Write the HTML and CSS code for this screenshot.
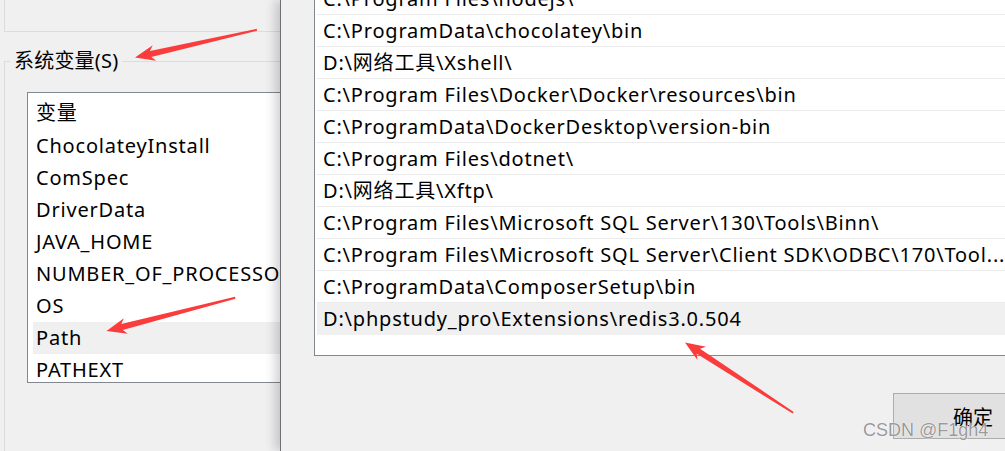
FILE: index.html
```html
<!DOCTYPE html>
<html lang="zh-CN">
<head>
<meta charset="utf-8">
<title>环境变量</title>
<link rel="stylesheet" href="styles.css">
</head>
<body>
<div class="screen">
  <div class="left">
    <div class="userbox"></div>
    <fieldset class="sysbox">
      <legend>系统变量(S)</legend>
      <div class="varlist">
        <div class="vhead">变量</div>
        <div class="vrow">ChocolateyInstall</div>
        <div class="vrow">ComSpec</div>
        <div class="vrow">DriverData</div>
        <div class="vrow">JAVA_HOME</div>
        <div class="vrow">NUMBER_OF_PROCESSORS</div>
        <div class="vrow">OS</div>
        <div class="vrow sel">Path</div>
        <div class="vrow">PATHEXT</div>
      </div>
    </fieldset>
  </div>
  <div class="dialog">
    <div class="pathlist">
      <div class="prow">C:\Program Files\nodejs\</div>
      <div class="prow">C:\ProgramData\chocolatey\bin</div>
      <div class="prow">D:\网络工具\Xshell\</div>
      <div class="prow">C:\Program Files\Docker\Docker\resources\bin</div>
      <div class="prow">C:\ProgramData\DockerDesktop\version-bin</div>
      <div class="prow">C:\Program Files\dotnet\</div>
      <div class="prow">D:\网络工具\Xftp\</div>
      <div class="prow">C:\Program Files\Microsoft SQL Server\130\Tools\Binn\</div>
      <div class="prow">C:\Program Files\Microsoft SQL Server\Client SDK\ODBC\170\Tool...</div>
      <div class="prow">C:\ProgramData\ComposerSetup\bin</div>
      <div class="prow sel">D:\phpstudy_pro\Extensions\redis3.0.504</div>
    </div>
    <div class="actions">
      <button class="ok">确定</button>
    </div>
  </div>
  <svg class="arrows" width="1005" height="451" viewBox="0 0 1005 451">
    <g fill="#fa3c3c">
      <polygon transform="translate(135 57.5) rotate(-12.8)" points="0,0 20,-8 16,-3 125,-1 125,1 16,3 20,8"/>
      <polygon transform="translate(106.5 331) rotate(-14.5)" points="0,0 20,-8 16,-3 133,-1 133,1 16,3 20,8"/>
      <polygon transform="translate(685 342.5) rotate(33)" points="0,0 20,-8 16,-3 129,-1 129,1 16,3 20,8"/>
    </g>
  </svg>
  <div class="watermark">CSDN @F1gh4</div>
</div>
</body>
</html>
```
FILE: styles.css
```css
html, body {
  margin: 0;
  padding: 0;
  background: #f0f0f0;
}

body {
  font-family: "Noto Sans", "Noto Sans CJK SC", sans-serif;
  font-size: 20px;
  letter-spacing: 0.8px;
  color: #000;
  overflow: hidden;
}

.screen {
  position: relative;
  display: flex;
  width: 1005px;
  height: 451px;
  overflow: hidden;
}

/* ---------- left window (环境变量) ---------- */
.left {
  width: 280px;
  flex: none;
  padding-left: 4px;
  box-sizing: border-box;
  overflow: hidden;
}

.userbox {
  height: 32px;
  box-sizing: border-box;
  border-left: 1px solid #dcdcdc;
  border-bottom: 1px solid #dcdcdc;
}

.sysbox {
  margin: 17px 0 0 0;
  padding: 0 0 0 22px;
  height: 420px;
  border: 1px solid #dcdcdc;
  border-right: none;
  box-sizing: border-box;
  min-width: 0;
}

.sysbox legend {
  margin-left: -17px;
  padding: 0 4px;
  line-height: 24px;
  letter-spacing: 0.2px;
}

.varlist {
  margin-top: 19px;
  width: 320px;
  height: 291px;
  box-sizing: border-box;
  background: #fff;
  border: 1px solid #828790;
  padding: 3px 0 0 5px;
  overflow: hidden;
}

.vhead {
  height: 34px;
  line-height: 34px;
  padding-left: 3px;
}

.vrow {
  height: 32px;
  line-height: 32px;
  padding-left: 3px;
  white-space: nowrap;
  overflow: hidden;
}

.vrow.sel {
  background: #f0f0f0;
}

/* ---------- right dialog (编辑环境变量) ---------- */
.dialog {
  position: relative;
  z-index: 1;
  flex: 1;
  min-width: 0;
  background: #f0f0f0;
  border-left: 1px solid #6e6e74;
  box-shadow: -5px 0 10px rgba(0, 0, 0, 0.18);
  padding-left: 33px;
}

.pathlist {
  margin-top: -20px;
  background: #fff;
  border: 1px solid #828790;
  border-right: none;
  padding: 2px 0 20px 2px;
}

.prow {
  height: 32px;
  box-sizing: border-box;
  line-height: 31px;
  padding-left: 6px;
  border-bottom: 1px solid #ebebeb;
  white-space: nowrap;
  overflow: hidden;
}

.prow.sel {
  background: #f0f0f0;
  border-bottom-color: transparent;
}

.actions {
  display: flex;
  margin-top: 37px;
  padding-left: 579px;
}

.ok {
  flex: none;
  width: 160px;
  height: 46px;
  padding: 0;
  background: #e1e1e1;
  border: 1px solid #adadad;
  border-radius: 0;
  font: inherit;
  letter-spacing: 0;
  color: #000;
}

/* ---------- overlays ---------- */
.arrows {
  position: absolute;
  left: 0;
  top: 0;
  z-index: 5;
  pointer-events: none;
}

.watermark {
  position: absolute;
  left: 863px;
  top: 419px;
  z-index: 6;
  font-family: "Liberation Sans", sans-serif;
  font-size: 18px;
  line-height: 22px;
  letter-spacing: 0;
  color: rgba(140, 140, 140, 0.9);
  text-shadow: 0 0 1px #fff, 0 0 1px #fff;
  white-space: nowrap;
}
```
